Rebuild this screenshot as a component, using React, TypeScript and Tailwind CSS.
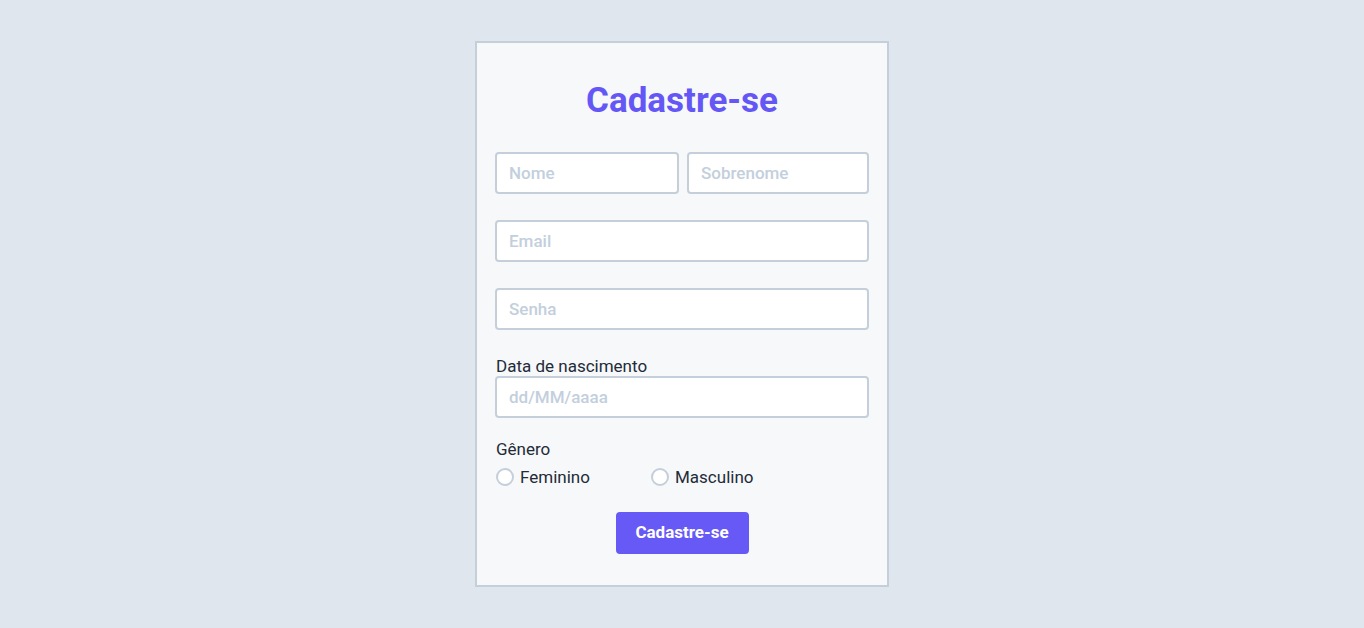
import React from "react";

export default function App() {
  const inputCls =
    "h-[42px] min-w-0 rounded-[4px] border-2 border-[#c4cfda] bg-white px-3 text-[17px] font-medium text-[#1e293b] placeholder:text-[#c3cfdc] outline-none";
  return (
    <div
      className="flex min-h-screen items-center justify-center bg-[#dfe6ee]"
      style={{ fontFamily: "Roboto, 'Noto Sans', sans-serif" }}
    >
      <form className="flex w-[414px] flex-col border-2 border-[#c4cfda] bg-[#f7f8fa] px-[18px] pt-[38px] pb-[31px]">
        <h1 className="mb-[31px] h-10 text-center text-[35px] font-bold leading-10 text-[#6457f5]">
          Cadastre-se
        </h1>
        <div className="mb-[26px] flex gap-2">
          <input className={inputCls + " w-[184px] shrink-0"} placeholder="Nome" />
          <input className={inputCls + " flex-1"} placeholder="Sobrenome" />
        </div>
        <input className={inputCls + " mb-[26px] w-full"} placeholder="Email" />
        <input className={inputCls + " mb-[26px] w-full"} type="password" placeholder="Senha" />
        <label className="h-5 pl-px text-[17px] leading-5 text-[#222b38]">Data de nascimento</label>
        <input className={inputCls + " mb-[21px] w-full"} placeholder="dd/MM/aaaa" />
        <span className="mb-2 h-5 pl-px text-[17px] leading-5 text-[#222b38]">Gênero</span>
        <div className="mb-[25px] flex h-5 items-center pl-px">
          <label className="flex w-[155px] items-center gap-[6px] text-[17px] leading-5 text-[#222b38]">
            <span className="h-[18px] w-[18px] rounded-full border-2 border-[#c4cfda] bg-white" />
            Feminino
          </label>
          <label className="flex items-center gap-[6px] text-[17px] leading-5 text-[#222b38]">
            <span className="h-[18px] w-[18px] rounded-full border-2 border-[#c4cfda] bg-white" />
            Masculino
          </label>
        </div>
        <div className="flex justify-center">
          <button
            type="button"
            className="h-[42px] w-[133px] rounded-[4px] bg-[#6659f6] text-[17px] font-bold text-white"
          >
            Cadastre-se
          </button>
        </div>
      </form>
    </div>
  );
}
